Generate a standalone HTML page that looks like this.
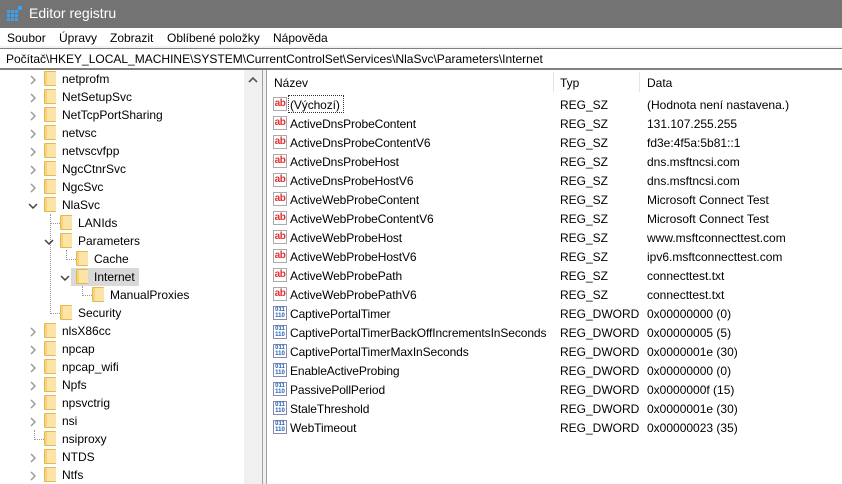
<!DOCTYPE html><html><head><meta charset="utf-8"><style>
*{margin:0;padding:0;box-sizing:border-box}
body{width:842px;height:484px;overflow:hidden;background:#fff;font-family:"Liberation Sans",sans-serif;font-size:12px;color:#000;position:relative}
.a{position:absolute;white-space:nowrap}
.fold{position:absolute;width:12px;height:15px;background:#f7d37a;border:1px solid #e4b84f;border-radius:1px}
.fold:after{content:"";position:absolute;left:2px;top:0;width:9px;height:13px;background:#fbe5a6}
.ab{position:absolute;width:14px;height:14px;font-weight:bold;font-size:10px;color:#d33;background:#fff;border:1px solid #aaa;line-height:12px;text-align:center;letter-spacing:-0.5px}
.bn{position:absolute;width:14px;height:14px;background:#fff;border:1px solid #88a;color:#1b5fb8;font-size:6px;line-height:6px;font-weight:bold;text-align:center}
.dot{position:absolute;border-left:1px dotted #999}
.doth{position:absolute;border-top:1px dotted #999}
</style></head><body>
<div class="a" style="left:0;top:0;width:842px;height:28px;background:#737373"></div>
<svg class="a" style="left:7px;top:6px" width="16" height="16"><g fill="#3aa0f0"><rect x="0" y="4" width="3" height="3"/><rect x="4" y="4" width="3" height="3"/><rect x="8" y="4" width="3" height="3"/><rect x="0" y="8" width="3" height="3"/><rect x="4" y="8" width="3" height="3"/><rect x="8" y="8" width="3" height="3"/><rect x="0" y="12" width="3" height="3"/><rect x="4" y="12" width="3" height="3"/><rect x="8" y="12" width="3" height="3"/><rect x="11" y="0" width="4" height="4"/></g></svg>
<div class="a" style="left:29px;top:5px;color:#fff;font-size:14px">Editor registru</div>
<div class="a" style="left:7px;top:31px">Soubor</div>
<div class="a" style="left:59px;top:31px">Úpravy</div>
<div class="a" style="left:110px;top:31px">Zobrazit</div>
<div class="a" style="left:167px;top:31px">Oblíbené položky</div>
<div class="a" style="left:273px;top:31px">Nápověda</div>
<div class="a" style="left:0;top:46px;width:842px;height:2px;background:#f2f2f2"></div>
<div class="a" style="left:0;top:48px;width:842px;height:1px;background:#808080"></div>
<div class="a" style="left:6px;top:52px">Počítač\HKEY_LOCAL_MACHINE\SYSTEM\CurrentControlSet\Services\NlaSvc\Parameters\Internet</div>
<div class="a" style="left:0;top:68px;width:842px;height:2px;background:#808080"></div>
<div class="a" style="left:244px;top:70px;width:18px;height:414px;background:#f0f0f0"></div>
<svg class="a" style="left:248px;top:76px" width="10" height="8"><path d="M1 6L5 2L9 6" stroke="#555" stroke-width="1.6" fill="none"/></svg>
<div class="a" style="left:262px;top:70px;width:1px;height:414px;background:#a0a0a0"></div>
<div class="a" style="left:263px;top:70px;width:3px;height:414px;background:#f0f0f0"></div>
<div class="a" style="left:266px;top:70px;width:1px;height:414px;background:#a0a0a0"></div>
<div class="a" style="left:71px;top:268px;width:68px;height:18px;background:#d9d9d9"></div>
<div class="dot" style="left:50px;top:214px;height:100px"></div>
<div class="doth" style="left:50px;top:223px;width:10px"></div>
<div class="doth" style="left:50px;top:313px;width:10px"></div>
<div class="dot" style="left:66px;top:250px;height:10px"></div>
<div class="doth" style="left:66px;top:259px;width:10px"></div>
<div class="dot" style="left:82px;top:286px;height:10px"></div>
<div class="doth" style="left:82px;top:295px;width:10px"></div>
<div class="dot" style="left:34px;top:430px;height:10px"></div>
<div class="doth" style="left:34px;top:439px;width:10px"></div>
<div id="tree"></div>
<div class="a" style="left:274px;top:76px">Název</div>
<div class="a" style="left:553px;top:72px;width:1px;height:20px;background:#e5e5e5"></div>
<div class="a" style="left:560px;top:76px">Typ</div>
<div class="a" style="left:639px;top:72px;width:1px;height:20px;background:#e5e5e5"></div>
<div class="a" style="left:647px;top:76px">Data</div>
<div class="a" style="left:288px;top:95px;width:56px;height:18px;border:1px dotted #333"></div>
<div id="list"></div>
<script>
var t=[["netprofm",1,1],["NetSetupSvc",1,1],["NetTcpPortSharing",1,1],["netvsc",1,1],["netvscvfpp",1,1],["NgcCtnrSvc",1,1],["NgcSvc",1,1],["NlaSvc",1,2],["LANIds",2,0],["Parameters",2,2],["Cache",3,0],["Internet",3,2],["ManualProxies",4,0],["Security",2,0],["nlsX86cc",1,1],["npcap",1,1],["npcap_wifi",1,1],["Npfs",1,1],["npsvctrig",1,1],["nsi",1,1],["nsiproxy",1,0],["NTDS",1,1],["Ntfs",1,1]];
var h="";t.forEach(function(r,i){var y=70+i*18,x=44+(r[1]-1)*16;
if(r[2]==1)h+='<svg class="a" style="left:'+(x-14)+'px;top:'+(y+5)+'px" width="6" height="10"><path d="M1 1L5 5L1 9" stroke="#999" stroke-width="1.5" fill="none"/></svg>';
if(r[2]==2)h+='<svg class="a" style="left:'+(x-16)+'px;top:'+(y+7)+'px" width="10" height="6"><path d="M1 1L5 5L9 1" stroke="#444" stroke-width="1.5" fill="none"/></svg>';
h+='<div class="fold" style="left:'+x+'px;top:'+(y+1)+'px"></div><div class="a" style="left:'+(x+18)+'px;top:'+(y+2)+'px">'+r[0]+'</div>';});
document.getElementById("tree").innerHTML=h;
var l=[["(Výchozí)",0,"(Hodnota není nastavena.)"],["ActiveDnsProbeContent",0,"131.107.255.255"],["ActiveDnsProbeContentV6",0,"fd3e:4f5a:5b81::1"],["ActiveDnsProbeHost",0,"dns.msftncsi.com"],["ActiveDnsProbeHostV6",0,"dns.msftncsi.com"],["ActiveWebProbeContent",0,"Microsoft Connect Test"],["ActiveWebProbeContentV6",0,"Microsoft Connect Test"],["ActiveWebProbeHost",0,"www.msftconnecttest.com"],["ActiveWebProbeHostV6",0,"ipv6.msftconnecttest.com"],["ActiveWebProbePath",0,"connecttest.txt"],["ActiveWebProbePathV6",0,"connecttest.txt"],["CaptivePortalTimer",1,"0x00000000 (0)"],["CaptivePortalTimerBackOffIncrementsInSeconds",1,"0x00000005 (5)"],["CaptivePortalTimerMaxInSeconds",1,"0x0000001e (30)"],["EnableActiveProbing",1,"0x00000000 (0)"],["PassivePollPeriod",1,"0x0000000f (15)"],["StaleThreshold",1,"0x0000001e (30)"],["WebTimeout",1,"0x00000023 (35)"]];
h="";l.forEach(function(r,i){var y=95+i*19;
h+=r[1]?'<div class="bn" style="left:273px;top:'+(y+2)+'px">011<br>110</div>':'<div class="ab" style="left:273px;top:'+(y+2)+'px">ab</div>';
h+='<div class="a" style="left:290px;top:'+(y+3)+'px;letter-spacing:-0.1px">'+r[0]+'</div><div class="a" style="left:560px;top:'+(y+3)+'px">'+(r[1]?"REG_DWORD":"REG_SZ")+'</div><div class="a" style="left:647px;top:'+(y+3)+'px">'+r[2]+'</div>';});
document.getElementById("list").innerHTML=h;
</script>
</body></html>
